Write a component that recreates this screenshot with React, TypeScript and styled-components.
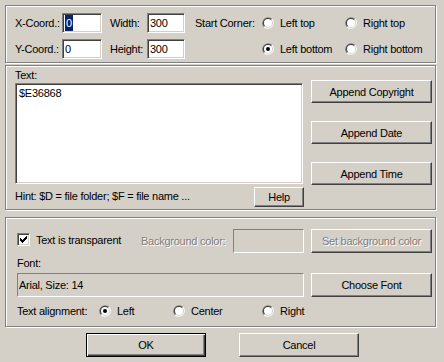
import React from 'react'
import styled, { createGlobalStyle } from 'styled-components'

const GlobalStyle = createGlobalStyle`
  html, body {
    margin:0;
    padding:0;
    background:#d4d0c8;
  }
  body {
    font-family: "Liberation Sans", Arial, sans-serif;
    font-size:11px;
    letter-spacing:-0.25px;
    color:#000;
  }
`

const Radio: React.FC<{ checked?: boolean }> = ({ checked }) => (
  <svg width="12" height="12" viewBox="0 0 12 12" style={{ flex: 'none' }}>
    <path d="M1.76 10.24 A6 6 0 0 1 10.24 1.76 Z" fill="#808080" />
    <path d="M1.76 10.24 A6 6 0 0 0 10.24 1.76 Z" fill="#ffffff" />
    <path d="M2.46 9.54 A5 5 0 0 1 9.54 2.46 Z" fill="#404040" />
    <path d="M2.46 9.54 A5 5 0 0 0 9.54 2.46 Z" fill="#d4d0c8" />
    <circle cx="6" cy="6" r="4" fill="#ffffff" />
    {checked && <circle cx="6" cy="6" r="2" fill="#000" />}
  </svg>
)

const RadioOption: React.FC<{ label: string; checked?: boolean; w?: number }> = ({ label, checked, w }) => (
  <RadioItem $w={w}>
    <Radio checked={checked} />
    <span>{label}</span>
  </RadioItem>
)

const App: React.FC = () =>
{
  return (
    <>
      <GlobalStyle />
      <Dialog>
        <Group $h={58}>
          <CoordGrid>
            <Label>X-Coord.:</Label>
            <Field><Selected>0</Selected></Field>
            <Label $pl={8}>Width:</Label>
            <Field>300</Field>
            <Label $pl={10}>Start Corner:</Label>
            <RadioOption label="Left top" />
            <RadioOption label="Right top" />

            <Label>Y-Coord.:</Label>
            <Field>0</Field>
            <Label $pl={8}>Height:</Label>
            <Field>300</Field>
            <span />
            <RadioOption label="Left bottom" checked />
            <RadioOption label="Right bottom" />
          </CoordGrid>
        </Group>

        <Group $h={145} $mt={2}>
          <TextGrid>
            <LeftCol>
              <SmallLabel>Text:</SmallLabel>
              <TextBox>$E36868</TextBox>
              <HintRow>
                <Hint>Hint: $D = file folder; $F = file name ...</Hint>
                <Button $w={50} $h={20} style={{ marginRight: -1 }}>Help</Button>
              </HintRow>
            </LeftCol>
            <ButtonCol>
              <Button $w={121} $h={23}>Append Copyright</Button>
              <Button $w={121} $h={23}>Append Date</Button>
              <Button $w={121} $h={23}>Append Time</Button>
            </ButtonCol>
          </TextGrid>
        </Group>

        <Group $h={110} $mt={7}>
          <Options>
            <OptionRow>
              <CheckItem>
                <CheckBox>
                  <svg width="7" height="7" viewBox="0 0 7 7">
                    <path d="M0 2h1v1h1v1h1v-1h1v-1h1v-1h1v-1h1v3h-1v1h-1v1h-1v1h-1v1h-1v-1h-1v-1h-1z" fill="#000" />
                  </svg>
                </CheckBox>
                <span>Text is transparent</span>
              </CheckItem>
              <Label $disabled>Background color:</Label>
              <FlatBox />
              <Button $w={121} $h={24} $disabled>Set background color</Button>
            </OptionRow>
            <FontLabel>Font:</FontLabel>
            <OptionRow $cols="287px 121px">
              <FlatBox>Arial, Size: 14</FlatBox>
              <Button $w={121} $h={24}>Choose Font</Button>
            </OptionRow>
            <AlignRow>
              <Label>Text alignment:</Label>
              <RadioOption label="Left" checked />
              <RadioOption label="Center" />
              <RadioOption label="Right" />
            </AlignRow>
          </Options>
        </Group>

        <ButtonBar>
          <Button $w={120} $h={24} $default>OK</Button>
          <Button $w={120} $h={24}>Cancel</Button>
        </ButtonBar>
      </Dialog>
    </>
  )
}

export default App

const Dialog = styled.div`
width:444px;
height:362px;
box-sizing:border-box;
padding:5px 0 0 5px;
background:#d4d0c8;
display:flex;
flex-direction:column;
`

const Group = styled.div<{ $h: number; $mt?: number }>`
width:431px;
height:${p => p.$h}px;
margin-top:${p => p.$mt || 0}px;
box-sizing:border-box;
border:1px solid #808080;
box-shadow: inset 1px 1px 0 #fff, 1px 1px 0 #fff;
flex:none;
`

const CoordGrid = styled.div`
display:grid;
grid-template-columns: 47px 40px 45px 38px 77px 83px auto;
grid-auto-rows:20px;
row-gap:6px;
padding:7px 0 0 9px;
align-items:center;
`

const Label = styled.span<{ $pl?: number; $disabled?: boolean }>`
padding-left:${p => p.$pl || 0}px;
white-space:nowrap;
color:${p => p.$disabled ? '#808080' : '#000'};
text-shadow:${p => p.$disabled ? '1px 1px 0 #fff' : 'none'};
`

const Field = styled.div`
height:20px;
box-sizing:border-box;
background:#fff;
border:1px solid;
border-color:#808080 #fff #fff #808080;
box-shadow: inset 1px 1px 0 #404040, inset -1px -1px 0 #d4d0c8;
padding:0 2px 0 2px;
display:flex;
align-items:center;
`

const Selected = styled.span`
background:#0a246a;
color:#fff;
height:16px;
line-height:16px;
padding:0 1px;
`

const RadioItem = styled.span<{ $w?: number }>`
display:flex;
align-items:center;
gap:6px;
white-space:nowrap;
width:${p => p.$w ? `${p.$w}px` : 'auto'};
`

const TextGrid = styled.div`
display:grid;
grid-template-columns: 288px 121px;
column-gap:8px;
padding-left:9px;
`

const LeftCol = styled.div`
display:flex;
flex-direction:column;
`

const SmallLabel = styled.div`
height:17px;
line-height:18px;
`

const TextBox = styled.div`
height:101px;
box-sizing:border-box;
background:#fff;
border:1px solid;
border-color:#808080 #fff #fff #808080;
box-shadow: inset 1px 1px 0 #404040, inset -1px -1px 0 #d4d0c8;
padding:3px 3px;
line-height:13px;
`

const HintRow = styled.div`
display:flex;
justify-content:space-between;
align-items:center;
padding-top:3px;
`

const Hint = styled.span`
margin-bottom:3px;
`

const ButtonCol = styled.div`
display:flex;
flex-direction:column;
gap:18px;
padding-top:14px;
`

const Button = styled.button<{ $w: number; $h: number; $default?: boolean; $disabled?: boolean }>`
width:${p => p.$w}px;
height:${p => p.$h}px;
box-sizing:border-box;
padding:0;
margin:0;
font:inherit;
letter-spacing:inherit;
background:#d4d0c8;
color:${p => p.$disabled ? '#808080' : '#000'};
text-shadow:${p => p.$disabled ? '1px 1px 0 #fff' : 'none'};
border:1px solid;
border-color:${p => p.$default ? '#000' : '#fff #404040 #404040 #fff'};
box-shadow:${p => p.$default
  ? 'inset 1px 1px 0 #fff, inset -1px -1px 0 #404040, inset -2px -2px 0 #808080'
  : 'inset -1px -1px 0 #808080'};
display:flex;
align-items:center;
justify-content:center;
white-space:nowrap;
flex:none;
`

const Options = styled.div`
padding:11px 0 0 11px;
display:flex;
flex-direction:column;
`

const OptionRow = styled.div<{ $cols?: string }>`
display:grid;
grid-template-columns:${p => p.$cols || '124px 92px 71px 121px'};
column-gap:0;
align-items:center;
height:24px;
& > button { margin-left:7px; }
`

const CheckItem = styled.span`
display:flex;
align-items:center;
gap:6px;
margin-bottom:3px;
white-space:nowrap;
`

const CheckBox = styled.span`
width:13px;
height:13px;
box-sizing:border-box;
background:#fff;
border:1px solid;
border-color:#808080 #fff #fff #808080;
box-shadow: inset 1px 1px 0 #404040, inset -1px -1px 0 #d4d0c8;
display:flex;
align-items:center;
justify-content:center;
flex:none;
`

const FlatBox = styled.div`
height:24px;
box-sizing:border-box;
border:1px solid;
border-color:#808080 #fff #fff #808080;
background:#d4d0c8;
display:flex;
align-items:center;
padding-left:1px;
`

const FontLabel = styled.div`
height:20px;
line-height:20px;
`

const AlignRow = styled.div`
display:grid;
grid-template-columns: 82px 74px 89px auto;
align-items:center;
height:20px;
margin-top:4px;
`

const ButtonBar = styled.div`
display:flex;
gap:33px;
padding-left:81px;
margin-top:6px;
`
